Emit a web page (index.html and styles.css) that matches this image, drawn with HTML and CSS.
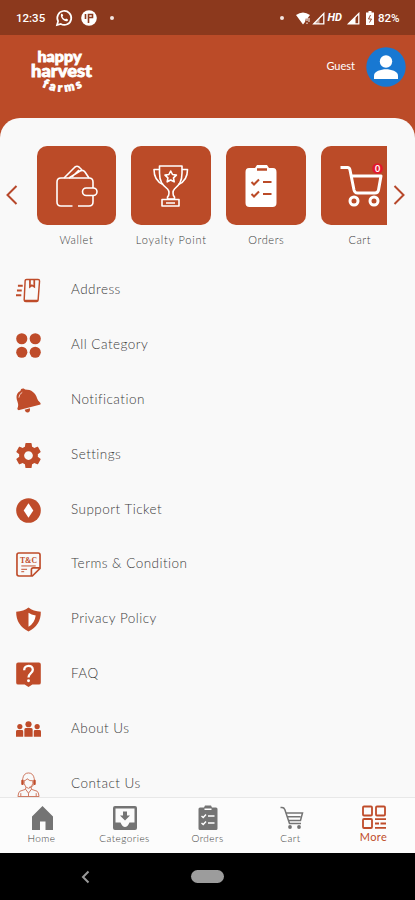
FILE: index.html
```html
<!DOCTYPE html>
<html lang="en">
<head>
    <meta charset="UTF-8">
    <meta name="viewport" content="width=device-width, initial-scale=1.0">
    <title>Happy Harvest Farms</title>
    <link rel="stylesheet" href="styles.css">
</head>
<body>
    <div class="status-bar">
        <span class="time">12:35</span>
        <svg class="whatsapp" width="18" height="18" viewBox="0 0 18 18">
            <path d="M2 16l1.100-3.800A7 7 0 1 1 5.800 15z" fill="none" stroke="#fff" stroke-width="1.700"/>
            <path d="M6.200 4.800l1.300.2.7 1.800-.8.9c.6 1.200 1.500 2 2.800 2.600l.9-.9 1.900 1-.2 1.300c-2.500 2.200-8.500-3-6.600-6.900z" fill="#fff"/>
        </svg>
        <svg class="app-dot" width="16" height="16" viewBox="0 0 16 16">
            <circle cx="8" cy="8" r="7.800" fill="#fff"/>
            <path d="M4.500 4v5M7.500 13V4.500h4v3h-4" fill="none" stroke="#8c391d" stroke-width="1.600"/>
        </svg>
        <span class="dot"></span>
        <span class="dot dot-right"></span>
        <svg class="wifi" width="14" height="13" viewBox="0 0 14 13">
            <path d="M0 3Q7-2 14 3l-3 4-1-1-1 4-2 2.500z" fill="#fff"/>
            <path d="M11 6v3M11 10.500v1.500M13 6v4" stroke="#fff" stroke-width="1"/>
        </svg>
        <svg class="signal" width="13" height="13" viewBox="0 0 13 13">
            <path d="M1.800 11.800L11.800 1.500v10.300z" fill="none" stroke="#fff" stroke-width="1.300"/>
            <path d="M2 12l5.500-5.500V12z" fill="#fff" opacity=".5"/>
        </svg>
        <span class="hd">HD</span>
        <svg class="signal-two" width="13" height="13" viewBox="0 0 13 13">
            <path d="M1.500 11.800L11.800 1.500v10.300z" fill="none" stroke="#fff" stroke-width="1.300"/>
            <path d="M1 12l7.500-7.500V12z" fill="#fff"/>
        </svg>
        <svg class="battery" width="8" height="14" viewBox="0 0 8 14">
            <path d="M2.500 0h3v1.500H8V14H0V1.500h2.500z" fill="#fff"/>
            <path d="M4.500 4L2.500 8h3l-2 3.500" fill="none" stroke="#8c391d" stroke-width=".9"/>
        </svg>
        <span class="percent">82%</span>
    </div>

    <div class="header">
        <svg class="logo" width="66" height="48" viewBox="0 0 66 48">
            <defs><path id="smile" d="M13 39.500Q34 50 55 39"/></defs>
            <text x="8.500" y="14.500" textLength="44" lengthAdjust="spacingAndGlyphs" font-size="15">happy</text>
            <text x="2" y="29.500" textLength="61" lengthAdjust="spacingAndGlyphs" font-size="17">harvest</text>
            <text font-size="12"><textPath href="#smile" textLength="42">farms</textPath></text>
        </svg>
        <div class="user">
            <span class="user-name">Guest</span>
            <svg class="avatar" width="40" height="40" viewBox="0 0 40 40">
                <circle cx="20" cy="20" r="19.700" fill="#1878d2"/>
                <circle cx="20" cy="14.500" r="6.200" fill="#fff"/>
                <path d="M8 32v-3.500c0-4 7-6.200 12-6.200s12 2.200 12 6.200V32z" fill="#fff"/>
            </svg>
        </div>
    </div>

    <div class="sheet">
        <div class="carousel">
            <svg class="arrow" width="12" height="20" viewBox="0 0 12 20"><path d="M10.500 1L1.500 10l9 9"/></svg>
            <div class="cards">
                <div class="card">
                    <div class="tile">
                        <svg width="80" height="80" viewBox="0 0 80 80" class="line-icon">
                            <path d="M35.500 60H24q-4 0-4-4V36q0-4 4-4h28q4 0 4 4v6M56 49v7q0 4-4 4H41"/>
                            <rect x="45.500" y="42" width="14.500" height="7.500" rx="3.700"/>
                            <path d="M27 32l11-11q2-1.500 4 0l3 3M32 32l11-7q3-1.500 5 1l4 6M35 31l7-7"/>
                        </svg>
                    </div>
                    <span class="card-label">Wallet</span>
                </div>
                <div class="card">
                    <div class="tile">
                        <svg width="80" height="80" viewBox="0 0 80 80" class="line-icon">
                            <path d="M28.500 20h22.500v7c0 9-3 12-7.500 16-2 2-2 6 0 8v2h-7v-2c2-2 2-6 0-8-5-4-8-7-8-16z"/>
                            <path d="M28.500 23.500H23c0 7 2 12 9 15M51 23.500h5.500c0 7-2 12-9 15M31 53.500h17V60H31zM35 57h9"/>
                            <path d="M39.700 25l1.800 3.500 3.900.6-2.900 2.800.7 3.900-3.500-1.800-3.500 1.800.7-3.900-2.900-2.800 3.900-.6z"/>
                        </svg>
                    </div>
                    <span class="card-label wide">Loyalty Point</span>
                </div>
                <div class="card">
                    <div class="tile">
                        <svg width="80" height="80" viewBox="0 0 80 80">
                            <path d="M23 22h6l2-3h10l2 3h4q3.500 0 3.500 4v31q0 4-4 4h-23q-4 0-4-4V26q0-4 3.500-4z" fill="#fff"/>
                            <path d="M31 23.500h10" stroke="#bb4b28" stroke-width="2.500"/>
                            <path d="M25.500 36l2.500 2.500 5-5M25.500 48l2.500 2.500 5-5M37 36h8.500M37 48h8.500" fill="none" stroke="#bb4b28" stroke-width="2"/>
                        </svg>
                    </div>
                    <span class="card-label">Orders</span>
                </div>
                <div class="card">
                    <div class="tile">
                        <svg width="80" height="80" viewBox="0 0 80 80">
                            <g fill="none" stroke="#fff" stroke-width="3" stroke-linejoin="round">
                                <path d="M19.500 21.500h7q2 0 2.500 2.500l4 20q.7 3 3.500 3H54q3 0 3.500-3L60 30H31"/>
                                <circle cx="33" cy="55" r="4"/>
                                <circle cx="53" cy="55" r="4"/>
                            </g>
                            <circle cx="56.500" cy="22.500" r="5.300" fill="#e3182d"/>
                            <text x="56.500" y="26" class="badge-count">0</text>
                        </svg>
                    </div>
                    <span class="card-label">Cart</span>
                </div>
            </div>
            <svg class="arrow" width="12" height="20" viewBox="0 0 12 20"><path d="M1.500 1l9 9-9 9"/></svg>
        </div>

        <div class="menu">
            <div class="menu-item">
                <svg class="menu-icon" viewBox="0 0 26 26">
                    <path d="M11 1.500h12q1.500 0 1.500 1.500L23 23q0 1.500-1.500 1.500H10q-1.500 0-1.500-1.500L9.500 3q0-1.500 1.500-1.500z" fill="none" stroke="#bf4c2a" stroke-width="1.500"/>
                    <path d="M14.500 1v8l2-1.500 2.500 1.500V1M8.500 23.500h14.500" fill="none" stroke="#bf4c2a" stroke-width="1.800"/>
                    <path d="M2 8h5M1 13h5M0 18h5.500" stroke="#bf4c2a" stroke-width="2"/>
                </svg>
                <span>Address</span>
            </div>
            <div class="menu-item">
                <svg class="menu-icon" viewBox="0 0 26 26">
                    <circle cx="6" cy="6" r="5.800"/><circle cx="20" cy="6" r="5.800"/>
                    <circle cx="6" cy="20" r="5.800"/><circle cx="20" cy="20" r="5.800"/>
                </svg>
                <span>All Category</span>
            </div>
            <div class="menu-item">
                <svg class="menu-icon" viewBox="0 0 26 26">
                    <path d="M4.500 3q.5-3 3.500-2.500l1.500 1C16 1.500 20.500 5 22 11q.5 2 3 4 1.500 2-.5 2.500L3.500 23q-2.500.2-2-2 1.500-2.500 0-7C-.5 9 .5 5 4.500 3z"/>
                    <path d="M9 22.500l5.500-1.500q.5 4-2 4.500T9 22.500z"/>
                    <path d="M3 10q0-3.500 3.500-5.500" fill="none" stroke="#f6d9cf" stroke-width="1"/>
                </svg>
                <span>Notification</span>
            </div>
            <div class="menu-item">
                <svg class="menu-icon" viewBox="2 2 20 20">
                    <path d="M19.430 12.980c.04-.32.07-.64.07-.98s-.03-.66-.07-.98l2.110-1.650c.19-.15.24-.42.12-.64l-2-3.460c-.12-.22-.39-.3-.61-.22l-2.490 1c-.52-.4-1.080-.73-1.690-.98l-.38-2.650C14.460 2.180 14.250 2 14 2h-4c-.25 0-.46.18-.49.42l-.38 2.650c-.61.25-1.170.59-1.690.98l-2.490-1c-.23-.09-.49 0-.61.22l-2 3.460c-.13.22-.07.49.12.64l2.110 1.650c-.04.32-.07.65-.07.98s.03.66.07.98l-2.110 1.650c-.19.15-.24.42-.12.64l2 3.460c.12.22.39.3.61.22l2.490-1c.52.4 1.080.73 1.690.98l.38 2.650c.03.24.24.42.49.42h4c.25 0 .46-.18.49-.42l.38-2.650c.61-.25 1.170-.59 1.690-.98l2.490 1c.23.09.49 0 .61-.22l2-3.460c.12-.22.07-.49-.12-.64l-2.110-1.650zM12 15.500c-1.930 0-3.500-1.570-3.500-3.500s1.570-3.500 3.500-3.500 3.500 1.570 3.500 3.500-1.570 3.500-3.500 3.500z"/>
                </svg>
                <span>Settings</span>
            </div>
            <div class="menu-item">
                <svg class="menu-icon" viewBox="0 0 26 26">
                    <circle cx="13" cy="13" r="12.800"/>
                    <path d="M13 5.500l5 7.500-5 7.500L8 13z" fill="#fff"/>
                </svg>
                <span>Support Ticket</span>
            </div>
            <div class="menu-item">
                <svg class="menu-icon" viewBox="0 0 26 26">
                    <path d="M3 1h20q2 0 2 2v14l-8 8H3q-2 0-2-2V3q0-2 2-2zM16 25v-6.500q0-2 2-2h7" fill="none" stroke="#bf4c2a" stroke-width="1.700"/>
                    <text x="13" y="11" class="tc-text">T&amp;C</text>
                    <path d="M5.500 14.500h15M5.500 18h6M5.500 20.500h3" stroke="#bf4c2a" stroke-width="1"/>
                </svg>
                <span>Terms &amp; Condition</span>
            </div>
            <div class="menu-item">
                <svg class="menu-icon" viewBox="0 0 26 26">
                    <path d="M13 .5q5 4 12.800 4.500Q26 19 13 25.500 0 19 .2 5 8 4.500 13 .5z"/>
                    <path d="M13 6q3 2 7.500 2.800-1 8-7.500 11.700z" fill="#fff"/>
                </svg>
                <span>Privacy Policy</span>
            </div>
            <div class="menu-item">
                <svg class="menu-icon" viewBox="0 0 26 26">
                    <path d="M2.200 .5h21.600q2 0 2 2v19q0 2-2 2H17l-4 2.500-4-2.500H2.200q-2 0-2-2v-19q0-2 2-2z"/>
                    <path d="M8.500 8.500c0-6 9-6 9-.5 0 3.500-4.500 4-4.500 8" fill="none" stroke="#fff" stroke-width="2.400"/>
                    <circle cx="13" cy="19.500" r="1.500" fill="#fff"/>
                </svg>
                <span>FAQ</span>
            </div>
            <div class="menu-item">
                <svg class="menu-icon" viewBox="0 0 26 26">
                    <circle cx="13" cy="7.500" r="3.200"/><circle cx="4" cy="10" r="2.700"/><circle cx="22" cy="10" r="2.700"/>
                    <path d="M8.700 20.500V13q0-1.500 2-1.500h4.600q2 0 2 1.500v7.500zM0 20.500V15q0-1.500 1.500-1.500H6q1.500 0 1.500 1.500v5.500zM18.500 20.500V15q0-1.500 1.500-1.500h4.500q1.500 0 1.500 1.500v5.500z"/>
                </svg>
                <span>About Us</span>
            </div>
            <div class="menu-item">
                <svg class="menu-icon" viewBox="0 0 26 26">
                    <g fill="none" stroke="#cd755c" stroke-width="1">
                        <path d="M7 9V7q1-6 6-6t6 6v2M8.500 9v3q1 4.500 4.500 5 3.500-.5 4.500-5V9q-3 1-6-2-1 2-3 2M18.500 13q-1 3-5 3M10 16v2l-6 2q-1.500 1-2 5.500h22q-.5-4.500-2-5.500l-6-2v-2M10 18l3 4 3-4M5 22v3M21 22v3M13 22v3"/>
                    </g>
                    <rect x="5.500" y="8" width="2.500" height="5.500" rx="1"/><rect x="18" y="8" width="2.500" height="5.500" rx="1"/>
                </svg>
                <span>Contact Us</span>
            </div>
        </div>
    </div>

    <div class="tabs">
        <div class="tab">
            <svg width="26" height="26" viewBox="0 0 26 26"><path d="M3 11.500L13.500 1 24 11.500V25h-7.500v-8.500h-5.500V25H3z"/></svg>
            <span>Home</span>
        </div>
        <div class="tab">
            <svg width="26" height="26" viewBox="0 0 26 26">
                <path fill-rule="evenodd" d="M3 1h20q2 0 2 2v20q0 2-2 2H3q-2 0-2-2V3q0-2 2-2zM3.500 3.500v14H8.500q2 4.500 4.500 4.500t4.500-4.500h5v-14z"/>
                <path d="M11 6.500h4v4h3l-5 5-5-5h3z"/>
            </svg>
            <span>Categories</span>
        </div>
        <div class="tab">
            <svg width="26" height="26" viewBox="0 0 26 26">
                <path d="M5 2.500h4l1-2h6l1 2h4q1.500 0 1.500 1.500v19.500q0 1.500-1.500 1.500H5q-1.500 0-1.500-1.500V4q0-1.500 1.500-1.500z"/>
                <path d="M9.500 4.300h7M6.500 11l1.700 1.500L11 9.500M6.500 18l1.700 1.500 2.800-3M13 11h6.500M13 18h6.500" fill="none" stroke="#fff" stroke-width="1.500"/>
            </svg>
            <span>Orders</span>
        </div>
        <div class="tab">
            <svg width="26" height="26" viewBox="0 0 26 26">
                <path d="M2.500 2.500h1.500q2 0 2.800 2L11.500 18.500H23M8.500 8H24.500L22.500 15.500H10.500M9.500 11.700h13" fill="none" stroke="#747474" stroke-width="1.500"/>
                <circle cx="12" cy="22" r="1.900"/><circle cx="21" cy="22" r="1.900"/>
            </svg>
            <span>Cart</span>
        </div>
        <div class="tab active">
            <svg width="26" height="26" viewBox="0 0 26 26" fill="none" stroke="#bf4c2a" stroke-width="1.800">
                <rect x="2" y="1.500" width="9" height="9" rx="1"/><rect x="15" y="1.500" width="9" height="9" rx="1"/>
                <rect x="2" y="14" width="9" height="9" rx="1"/>
                <path d="M14 14.200h11M14 18.500h4M19.500 18.500h5.500M14 22.800h11"/>
            </svg>
            <span>More</span>
        </div>
    </div>

    <div class="system-nav">
        <svg class="back" width="9" height="14" viewBox="0 0 9 14"><path d="M7.500 1.500L2 7l5.500 5.500"/></svg>
        <span class="home-pill"></span>
    </div>
</body>
</html>
```
FILE: styles.css
```css
* { box-sizing: border-box; }

body {
    margin: 0;
    width: 415px;
    height: 900px;
    overflow: hidden;
    display: flex;
    flex-direction: column;
    font-family: Lato, "Open Sans", sans-serif;
    font-weight: 300;
    background: #bb4b28;
    color: #3c3c3c;
}

svg {
    display: block;
    flex-shrink: 0;
}

/* Android status bar */
.status-bar {
    height: 35px;
    flex-shrink: 0;
    display: flex;
    align-items: center;
    padding: 1px 16px 0 16px;
    background: #8c391d;
    color: #fff;
    font-family: Roboto, sans-serif;
    font-size: 11.5px;
    font-weight: 500;
}

.time { width: 39px; }
.whatsapp { margin-right: 8px; }
.app-dot { margin-right: 13px; }

.dot {
    width: 4px;
    height: 4px;
    border-radius: 50%;
    background: #f3e5df;
}

.dot-right { margin: 0 12px 0 auto; }
.wifi { margin-right: 2px; }

.hd {
    margin: -1px 5px 0 3px;
    font-size: 11px;
    font-style: italic;
    font-weight: 700;
}

.battery { margin: 0 4px 0 6px; }
.percent { width: 21px; }

.header {
    height: 83px;
    flex-shrink: 0;
    display: flex;
    justify-content: space-between;
    align-items: flex-start;
    padding: 12px 9px 0 29px;
}

.logo {
    fill: #fff;
    stroke: #fff;
    stroke-width: 0.8;
    font-family: Lato, sans-serif;
    font-weight: 900;
    overflow: visible;
}

.user {
    display: flex;
    align-items: center;
    gap: 11px;
    color: #fff;
    font-size: 11px;
    font-weight: 400;
}

.user-name { margin-top: -4px; }

.sheet {
    flex: 1;
    min-height: 0;
    overflow: hidden;
    background: #f9f9f9;
    border-radius: 20px 20px 0 0;
}

.carousel {
    display: flex;
    align-items: flex-start;
    padding: 27.5px 10px 0 6px;
}

.arrow {
    margin-top: 39.5px;
    fill: none;
    stroke: #b7482b;
    stroke-width: 2;
}

.cards {
    flex: 1;
    display: flex;
    gap: 15.3px;
    margin: 0 6px 0 18.5px;
    overflow: hidden;
}

.card {
    width: 79.7px;
    flex-shrink: 0;
    text-align: center;
}

.tile {
    height: 79.5px;
    border-radius: 10px;
    background: #bb4b28;
}

.line-icon {
    fill: none;
    stroke: #fff;
    stroke-width: 1.6;
    stroke-linejoin: round;
}

.badge-count {
    fill: #fff;
    font-size: 9px;
    font-weight: 700;
    text-anchor: middle;
}

.card-label {
    display: block;
    margin-top: 8px;
    font-size: 11px;
    line-height: 14px;
    letter-spacing: 0.6px;
    white-space: nowrap;
}

.wide { letter-spacing: 0.8px; }

.card:last-child .card-label { margin-right: 3px; }

.menu { padding: 16px 16px 0; }

.menu-item {
    height: 54.9px;
    display: flex;
    align-items: center;
    gap: 30px;
    font-size: 13.5px;
    letter-spacing: 0.48px;
}

.menu-item span { margin-top: -3px; }

.menu-icon {
    width: 25px;
    height: 25px;
    fill: #bf4c2a;
}

.tc-text {
    font-family: "Liberation Serif", serif;
    font-size: 8px;
    font-weight: 700;
    letter-spacing: 0;
    text-anchor: middle;
}

/* Bottom tab bar */
.tabs {
    height: 56px;
    flex-shrink: 0;
    display: flex;
    background: #fcfcfc;
    border-top: 1px solid #e8e8e8;
}

.tab {
    flex: 1;
    display: flex;
    flex-direction: column;
    align-items: center;
    padding-top: 7px;
    fill: #747474;
    font-size: 10px;
    line-height: 14px;
    letter-spacing: 0.45px;
}

.active {
    color: #bf4c2a;
    font-size: 11px;
    font-weight: 400;
    line-height: 12px;
}

.system-nav {
    height: 47px;
    flex-shrink: 0;
    display: flex;
    align-items: center;
    padding-left: 81px;
    background: #000;
}

.back {
    fill: none;
    stroke: #999;
    stroke-width: 2;
}

.home-pill {
    width: 33px;
    height: 13px;
    margin-left: 101px;
    border-radius: 7px;
    background: #9c9c9c;
}
```
